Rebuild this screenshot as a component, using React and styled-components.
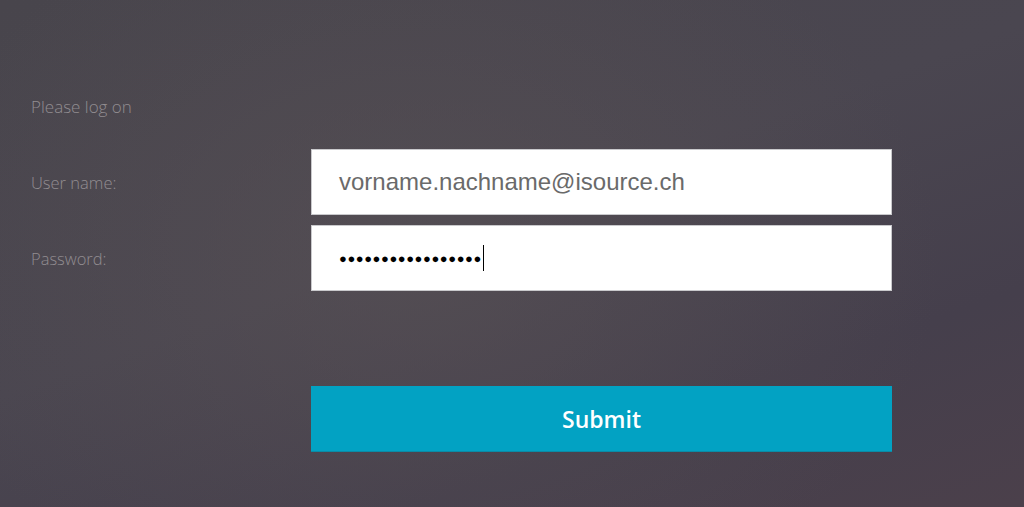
import React from "react";
import styled, { createGlobalStyle } from "styled-components";

const GlobalStyle = createGlobalStyle`
  html, body {
    margin: 0;
    padding: 0;
    height: 100%;
  }
  body {
    font-family: "Open Sans", "Liberation Sans", sans-serif;
  }
  #root {
    height: 100%;
  }
`;

const Page = styled.div`
  min-height: 100vh;
  box-sizing: border-box;
  padding: 96px 0 0 31px;
  background:
    radial-gradient(ellipse 520px 380px at 420px 260px, rgba(92, 84, 86, 0.5), rgba(92, 84, 86, 0) 100%),
    linear-gradient(160deg, #48454c 0%, #4a4650 45%, #453f4c 75%, #4b404b 100%);
`;

const Heading = styled.div`
  font-size: 17px;
  font-weight: 300;
  line-height: 22px;
  color: #928d91;
  margin-bottom: 31px;
`;

const Form = styled.form`
  display: grid;
  grid-template-columns: 280px 581px;
  grid-template-rows: 66px 66px 75px 66px;
  row-gap: 10px;
  align-items: center;
`;

const Label = styled.label`
  font-size: 16.5px;
  font-weight: 300;
  color: #928d91;
`;

const Field = styled.div`
  box-sizing: border-box;
  height: 66px;
  background: #ffffff;
  border: 1px solid #c9c9cc;
  display: flex;
  align-items: center;
  padding: 0 0 0 27px;
  font-family: "Liberation Sans", Arial, sans-serif;
  font-size: 24px;
  color: #6a6a6a;
`;

const Dots = styled.span`
  color: #000;
  font-size: 13px;
  letter-spacing: 0.55px;
`;

const Caret = styled.span`
  display: inline-block;
  width: 1px;
  height: 26px;
  background: #000;
  margin-left: 1px;
`;

const Spacer = styled.div`
  grid-column: 1 / -1;
`;

const Button = styled.button`
  grid-column: 2;
  height: 66px;
  border: none;
  border-bottom: 1px solid #0a8ca6;
  background: #02a2c3;
  color: #ffffff;
  font-family: "Open Sans", sans-serif;
  font-size: 23px;
  font-weight: 600;
  cursor: pointer;
`;

export default function App() {
  return (
    <Page>
      <GlobalStyle />
      <Heading>Please log on</Heading>
      <Form onSubmit={(e) => e.preventDefault()}>
        <Label>User name:</Label>
        <Field>vorname.nachname@isource.ch</Field>
        <Label>Password:</Label>
        <Field>
          <Dots>{"\u25CF".repeat(17)}</Dots>
          <Caret />
        </Field>
        <Spacer />
        <Button type="submit">Submit</Button>
      </Form>
    </Page>
  );
}
